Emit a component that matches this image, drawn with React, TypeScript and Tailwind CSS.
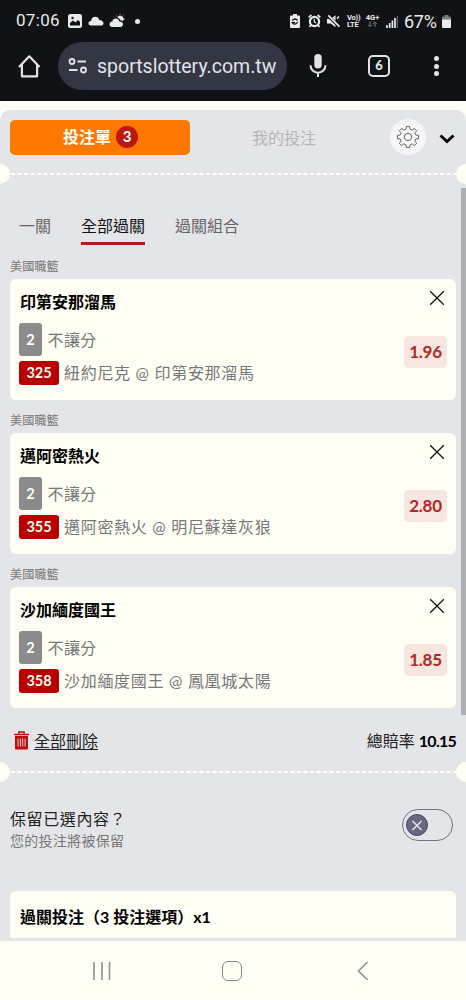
import { FC, ReactNode } from "react";

interface Bet {
  team: string;
  pick: string;
  market: string;
  code: string;
  match: string;
  odds: string;
}

const bets: Bet[] = [
  { team: "印第安那溜馬", pick: "2", market: "不讓分", code: "325", match: "紐約尼克 @ 印第安那溜馬", odds: "1.96" },
  { team: "邁阿密熱火", pick: "2", market: "不讓分", code: "355", match: "邁阿密熱火 @ 明尼蘇達灰狼", odds: "2.80" },
  { team: "沙加緬度國王", pick: "2", market: "不讓分", code: "358", match: "沙加緬度國王 @ 鳳凰城太陽", odds: "1.85" },
];

const StatusBar: FC = () => (
  <div className="flex h-[42px] items-center justify-between pl-4 pr-[15px] font-['Roboto',sans-serif] text-[#e9eaec]">
    <div className="flex items-center">
      <span className="w-[45px] text-[17px] tracking-[0.3px] whitespace-nowrap">07:06</span>
      <svg width="14" height="14" viewBox="0 0 14 14" className="ml-[7px]">
        <rect width="14" height="14" rx="2.5" fill="currentColor" />
        <path d="M2 11.5V9l3-2.5 2.5 2L10 6l2 2v3.5z" fill="#111216" />
        <circle cx="4.5" cy="4" r="1.2" fill="#111216" />
      </svg>
      <svg width="16" height="10" viewBox="0 0 16 10" className="ml-[6px]">
        <path d="M3 9.5C1.5 9.5 .5 8.500 .5 7.200S1.600 5 3 5C3.300 2.300 5 .8 7.200 .8c2 0 3.500 1.200 4 3.200 2.400 0 4.300 1.500 4.300 3.200 0 1.400-1.100 2.300-2.500 2.300z" fill="currentColor" />
      </svg>
      <svg width="16" height="14" viewBox="0 0 16 14" className="ml-[5px]">
        <path d="M3.500 13C1.500 13 .5 11.700 .5 10.200S1.700 7.500 3.300 7.500C3.700 5.500 5 4.500 6.700 4.500c1.900 0 3.200 1.200 3.600 3C12.700 7.500 14 8.700 14 10.300S12.800 13 11.200 13z" fill="currentColor" />
        <path d="M8.300 3.600A3.200 3.200 0 0 1 14 7.200c-.6-.5-1.600-.9-2.700-.9C10.700 4.900 9.600 4 8.300 3.600z" fill="currentColor" />
        <path d="M7.500 1.700l.6.8M11 .3v1M14 1.700l-.6.8M15.800 5h-1" stroke="currentColor" strokeWidth="1" />
      </svg>
      <span className="ml-[10px] size-[5px] rounded-full bg-[#e9eaec]" />
    </div>
    <div className="flex items-center">
      <svg width="10" height="14" viewBox="0 0 10 14">
        <path d="M3 0h4v1.500h2q1 0 1 1V13q0 1-1 1H1q-1 0-1-1V2.500q0-1 1-1h2z" fill="currentColor" />
        <path d="M2.300 6.500Q5 3.500 7.500 6.500M7.700 8Q5 12 2.300 8.500L5 8.300" stroke="#111216" strokeWidth="1.300" fill="none" />
      </svg>
      <svg width="13" height="14" viewBox="0 0 13 14" className="ml-2">
        <circle cx="6.500" cy="7.500" r="4.600" stroke="currentColor" strokeWidth="2.200" fill="none" />
        <path d="M.7 3.300L3.400 1M12.300 3.300L9.600 1M2.800 11.300L1.500 13M10.200 11.300l1.300 1.700" stroke="currentColor" strokeWidth="1.700" />
        <path d="M6.300 5v3l2 1" stroke="currentColor" strokeWidth="1.200" fill="none" />
      </svg>
      <svg width="13" height="14" viewBox="0 0 13 14" className="ml-[6px]">
        <path d="M0 5h3.500L8.500 1.200v12L3.800 9.500H0z" fill="currentColor" />
        <path d="M1 1.800l11.500 11" stroke="#111216" strokeWidth="3.200" />
        <path d="M1.300 1.300l11.200 11.400" stroke="currentColor" strokeWidth="1.800" />
        <path d="M10 4.500L12 2.500" stroke="currentColor" strokeWidth="1.600" />
      </svg>
      <div className="ml-[7px] flex w-[14px] flex-col text-[7.5px] leading-[7px] font-bold tracking-[-0.2px] whitespace-nowrap">
        <span>Vo))</span>
        <span>LTE</span>
      </div>
      <div className="ml-[4px] flex w-[15px] flex-col items-center text-[7.5px] leading-[7px] font-bold">
        <span>4G+</span>
        <svg width="11" height="7" viewBox="0 0 11 7">
          <path d="M3 .5v5M1 3.700l2 2 2-2M8 6V1M6 2.800l2-2 2 2" stroke="#77797c" strokeWidth="1" fill="none" />
        </svg>
      </div>
      <svg width="12" height="13" viewBox="0 0 12 13" className="ml-[6px]">
        <path d="M1 13v-3M3.700 13V8M6.400 13V5.500M9 13V3" stroke="currentColor" strokeWidth="1.700" />
        <path d="M11.300 13V1" stroke="#66686b" strokeWidth="1.300" />
      </svg>
      <span className="ml-[6px] w-[35px] text-[18px] tracking-[-0.3px] whitespace-nowrap">67%</span>
      <svg width="9" height="13" viewBox="0 0 9 13" className="ml-[3px]">
        <path d="M2.500 0h4v1.500H8q1 0 1 1V5H0V2.500q0-1 1-1h1.500z" fill="#77797c" />
        <path d="M0 4.500h9V12q0 1-1 1H1q-1 0-1-1z" fill="currentColor" />
      </svg>
    </div>
  </div>
);

const BrowserBar: FC = () => (
  <div className="flex h-12 items-center text-[#e2e3ea]">
    <svg width="24" height="24" viewBox="0 0 24 24" fill="none" stroke="currentColor" strokeWidth="2.200" strokeLinejoin="round" className="ml-[17px]">
      <path d="M2 13L12.300 2.300 22.500 13M4.900 10.500v11.800h15.200V10.500" />
    </svg>
    <div className="ml-[17px] flex h-12 w-[229px] items-center rounded-full bg-[#333744] pl-[10px]">
      <svg width="20" height="18" viewBox="0 0 20 18" fill="none" stroke="currentColor" strokeWidth="1.800">
        <circle cx="4" cy="4.500" r="2.500" />
        <path d="M9.500 4.500H18M1 13h8.500" />
        <circle cx="15.500" cy="13" r="2.500" />
      </svg>
      <span className="ml-[9px] pt-px font-['Roboto',sans-serif] text-[19.5px] whitespace-nowrap">sportslottery.com.tw</span>
    </div>
    <svg width="20" height="26" viewBox="0 0 20 26" className="ml-[21px]">
      <rect x="6.300" y="1" width="7.400" height="14.500" rx="3.700" fill="currentColor" />
      <path d="M2.500 12.200a7.500 7.500 0 0 0 15 0M10 19.500v4.500" stroke="currentColor" strokeWidth="2" fill="none" />
    </svg>
    <div className="ml-[40px] flex size-[22px] items-center justify-center rounded-[5px] border-2 border-[#e2e3ea] font-['Lato',sans-serif] text-[13px] font-black">6</div>
    <div className="ml-[44px] flex flex-col gap-[2.5px]">
      <span className="size-[5px] rounded-full bg-[#e2e3ea]" />
      <span className="size-[5px] rounded-full bg-[#e2e3ea]" />
      <span className="size-[5px] rounded-full bg-[#e2e3ea]" />
    </div>
  </div>
);

// ticket edge: half circles on both sides with a dashed line between
const Perforation: FC = () => (
  <div className="flex h-5 shrink-0 items-center justify-between overflow-hidden">
    <span className="-ml-[10px] size-5 shrink-0 rounded-full bg-[#fffef5]" />
    <svg height="2" className="min-w-0 flex-1">
      <line x1="1" y1="1" x2="446" y2="1" stroke="#fff" strokeWidth="2" strokeDasharray="4 2.5" />
    </svg>
    <span className="-mr-[10px] size-5 shrink-0 rounded-full bg-[#fffef5]" />
  </div>
);

const GEAR_TEETH = [0, 45, 90, 135, 180, 225, 270, 315];

const gearPoint = (deg: number, r: number) => {
  const a = (deg * Math.PI) / 180;
  return `${(12 + r * Math.sin(a)).toFixed(2)} ${(12 - r * Math.cos(a)).toFixed(2)}`;
};

const gearPath =
  "M" +
  GEAR_TEETH.map((t) =>
    [gearPoint(t - 13, 8.3), gearPoint(t - 9, 10.7), gearPoint(t + 9, 10.7), gearPoint(t + 13, 8.3)].join("L") +
    `Q${gearPoint(t + 22.5, 7.6)} `
  ).join("") +
  gearPoint(-13, 8.3) +
  "z";

const GearIcon: FC = () => (
  <svg width="24" height="24" viewBox="0 0 24 24" fill="none" stroke="#555" strokeWidth="0.9" strokeLinejoin="round">
    <path d={gearPath} />
    <circle cx="12" cy="12" r="3.700" />
  </svg>
);

const TrashIcon: FC = () => (
  <svg width="15" height="19" viewBox="0 0 15 19">
    <path d="M5 2.500V1h5v1.500M0 3.500h15" stroke="#c00d0d" strokeWidth="1.600" fill="none" />
    <path d="M1 5h13v12.500q0 1-1 1H2q-1 0-1-1z" fill="#c00d0d" />
    <path d="M4 7.500v8M6.400 7.500v8M8.700 7.500v8M11.100 7.500v8" stroke="#e4e5e8" strokeWidth="0.9" />
  </svg>
);

const Tab: FC<{ active?: boolean; children: ReactNode }> = ({ active, children }) => (
  <div className={active ? "h-[31px] border-b-[3px] border-[#b51a1e] text-[#111]" : "h-[31px] text-[#666]"}>
    {children}
  </div>
);

const BetCard: FC<{ bet: Bet }> = ({ bet }) => (
  <div className="h-[154px]">
    <div className="h-[22px] pt-px text-[12.2px] leading-[18px] text-[#777]">美國職籃</div>
    <div className="flex h-[121px] justify-between rounded-md bg-[#fffef5] px-[9px]">
      <div>
        <h4 className="mt-[11px] pl-px text-base leading-6 font-bold text-black">{bet.team}</h4>
        <div className="mt-[9px] flex items-center">
          <span className="flex h-[33px] w-[23px] items-center justify-center rounded-[3px] bg-[#8b8b8b] text-[14.5px] font-bold text-[#fffef5]">
            {bet.pick}
          </span>
          <span className="ml-[5.5px] text-base tracking-[0.4px] text-[#777]">{bet.market}</span>
        </div>
        <div className="mt-[5px] flex items-center">
          <span className="flex h-6 w-10 items-center justify-center rounded-[3px] bg-[#b80000] text-[14.5px] font-bold text-[#fffef5]">
            {bet.code}
          </span>
          <span className="ml-[5px] text-base leading-6 tracking-[0.7px] whitespace-nowrap text-[#777]">{bet.match}</span>
        </div>
      </div>
      <div className="flex flex-col items-end">
        <svg width="16" height="16" viewBox="0 0 16 16" stroke="#111" strokeWidth="1.3" className="mt-[11px] mr-[2px]">
          <path d="M1.200 1.200l13.600 13.600M14.800 1.200L1.200 14.800" />
        </svg>
        <span className="mt-[30px] flex h-8 w-[43px] items-center justify-center rounded-[5px] bg-[#f7e5df] pb-px text-[17px] font-bold tracking-[-0.3px] text-[#b32626]">
          {bet.odds}
        </span>
      </div>
    </div>
  </div>
);

const App: FC = () => {
  return (
    <div className="flex h-[1000px] w-[466px] flex-col overflow-hidden bg-[#fffef5] font-['Lato','Noto_Sans_CJK_TC',sans-serif]">
      <header className="h-[101px] shrink-0 bg-[#111216]">
        <StatusBar />
        <BrowserBar />
      </header>

      <main className="mt-[9px] flex h-[831px] shrink-0 flex-col rounded-t-[10px] bg-[#e4e5e8]">
        <div className="flex h-[54px] shrink-0 items-center pl-[10px]">
          <div className="flex h-[35px] w-[180px] items-center justify-center gap-[5px] rounded-[5px] bg-[#ff7900] pl-px text-base font-bold text-[#fffef5]">
            投注單
            <span className="flex size-[22px] items-center justify-center rounded-full bg-[#bd1712] pb-px text-[15px]">3</span>
          </div>
          <span className="ml-[62px] w-[66px] pt-0.5 text-base whitespace-nowrap text-[#b4b5b7]">我的投注</span>
          <span className="ml-[72px] flex size-9 shrink-0 items-center justify-center rounded-full bg-[#f4f5f7]">
            <GearIcon />
          </span>
          <svg width="16" height="10" viewBox="0 0 16 10" fill="none" stroke="#000" strokeWidth="2.800" className="mt-[3px] ml-[13px]">
            <path d="M1.500 1.500L8 7.500l6.500-6" />
          </svg>
        </div>
        <Perforation />

        <div className="flex h-[531px] shrink-0 justify-between pt-[4px]">
          <div className="ml-[10px] w-[446px] pt-[26px]">
            <div className="flex h-[43px] gap-[30px] pl-[9px] text-base leading-6 whitespace-nowrap">
              <Tab>一關</Tab>
              <Tab active>全部過關</Tab>
              <Tab>過關組合</Tab>
            </div>
            {bets.map((bet) => (
              <BetCard key={bet.code} bet={bet} />
            ))}
          </div>
          <div className="h-[527px] w-[5px] bg-[#aeafb0]" />
        </div>

        <div className="flex h-[47px] shrink-0 items-center justify-between pt-[3px] pr-[10px] pl-[14px]">
          <div className="flex items-center gap-[5px]">
            <TrashIcon />
            <span className="pt-0.5 text-base text-[#222] underline underline-offset-2">全部刪除</span>
          </div>
          <span className="pt-0.5 text-base text-[#222]">
            總賠率 <b className="tracking-[-0.75px] text-black">10.15</b>
          </span>
        </div>
        <Perforation />

        <div className="mt-[25px] flex h-[45px] shrink-0 justify-between pr-[13px] pl-[10px]">
          <div>
            <p className="text-base leading-6 tracking-[0.6px] text-[#222]">保留已選內容？</p>
            <p className="text-[14px] leading-[20px] tracking-[0.3px] text-[#777]">您的投注將被保留</p>
          </div>
          <div className="mt-[2px] flex h-8 w-[51px] items-center rounded-full border border-[#737386] pl-[3px]">
            <svg width="22" height="22" viewBox="0 0 22 22">
              <circle cx="11" cy="11" r="10.500" fill="#666980" stroke="#454660" />
              <path d="M6.500 7l9 9M15.500 7l-9 9" stroke="#eee" strokeWidth="1.3" />
            </svg>
          </div>
        </div>

        <div className="mx-[10px] mt-[39px] h-[47px] shrink-0 rounded-t-md bg-[#fffef5] pt-[14px] pl-[10px] text-base leading-6 font-bold text-black">
          過關投注（3 投注選項）x1
        </div>
      </main>

      <nav className="flex h-[59px] items-center text-[#93938f]">
        <svg width="20" height="20" viewBox="0 0 20 20" stroke="currentColor" strokeWidth="1.600" className="ml-[92px]">
          <path d="M2 1v18M10 1v18M17.500 1v18" />
        </svg>
        <span className="ml-[110px] size-5 rounded-[6px] border-[1.5px] border-[#85858a]" />
        <svg width="12" height="20" viewBox="0 0 12 20" fill="none" stroke="currentColor" strokeWidth="1.600" className="ml-[115px]">
          <path d="M10.500 1L1.500 10l9 9" />
        </svg>
      </nav>
    </div>
  );
};

export default App;
